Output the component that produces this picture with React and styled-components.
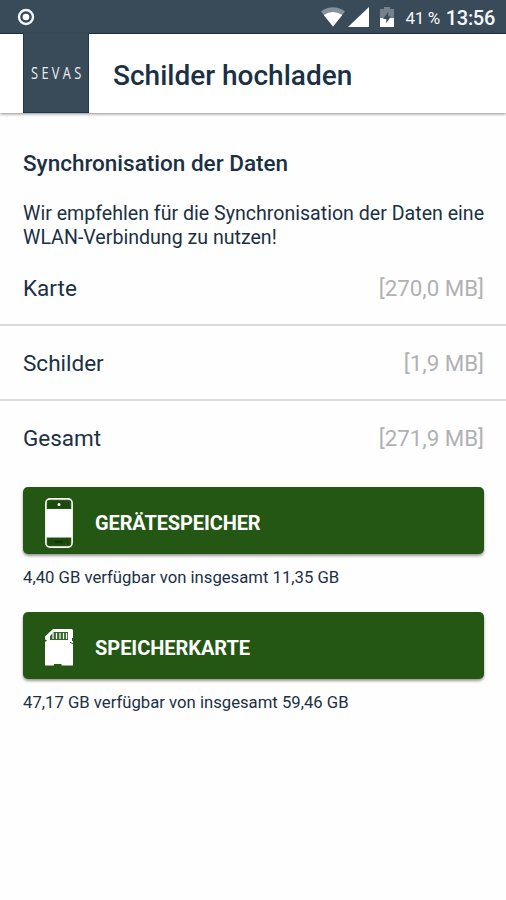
import styled, {createGlobalStyle} from "styled-components"

const sizes = [
    {label: "Karte", value: "[270,0 MB]"},
    {label: "Schilder", value: "[1,9 MB]"},
    {label: "Gesamt", value: "[271,9 MB]"},
]

const App = () => {

return (
    <Screen>
        <GlobalStyle/>
        <StatusBar>
            <RecordIcon/>
            <StatusIcons>
                <WifiIcon/>
                <SignalIcon/>
                <BatteryIcon/>
                <Percent>41 %</Percent>
                <Clock>13:56</Clock>
            </StatusIcons>
        </StatusBar>
        <Header>
            <Logo><LogoText>SEVAS</LogoText></Logo>
            <Title>Schilder hochladen</Title>
        </Header>
        <Intro>
            <Subtitle>Synchronisation der Daten</Subtitle>
            <Text>Wir empfehlen für die Synchronisation der Daten eine<br/>WLAN-Verbindung zu nutzen!</Text>
        </Intro>
        <List>
            {sizes.map(({label, value}) => (
                <Row key={label}>
                    <span>{label}</span>
                    <Value>{value}</Value>
                </Row>
            ))}
        </List>
        <Actions>
            <Button $spacing="-0.12px"><PhoneIcon/>GERÄTESPEICHER</Button>
            <Caption>4,40 GB verfügbar von insgesamt 11,35 GB</Caption>
            <Button $spacing="-0.04px"><CardIcon/>SPEICHERKARTE</Button>
            <Caption>47,17 GB verfügbar von insgesamt 59,46 GB</Caption>
        </Actions>
    </Screen>
)

}

const RecordIcon = () => (
    <svg width="18" height="18" viewBox="0 0 18 18">
        <circle cx="9" cy="9" r="7" fill="none" stroke="#f3f6f8" strokeWidth="2.4"/>
        <circle cx="9" cy="9" r="3.3" fill="#fff"/>
    </svg>
)

const WifiIcon = () => (
    <svg width="24" height="20" viewBox="0 0 24 20">
        <path d="M0 4.4Q12 -3.8 24 4.4L12 19.5Z" fill="#84919b"/>
        <path d="M2.7 8Q12 2 21.3 8L12 19.5Z" fill="#fff"/>
    </svg>
)

const SignalIcon = () => (
    <svg width="21" height="20" viewBox="0 0 21 20">
        <path d="M21 0V20H0Z" fill="#fff"/>
    </svg>
)

const BatteryIcon = () => (
    <svg width="14" height="20" viewBox="0 0 14 20">
        <path d="M4 0H10V2H14V11H0V2H4Z" fill="#74828d"/>
        <path d="M0 11H14V20H0Z" fill="#fff"/>
        <path d="M8.2 5L3 12H6.3V16L11 9.6H8.2Z" fill="#394b59"/>
    </svg>
)

const PhoneIcon = () => (
    <svg width="28" height="50" viewBox="0 0 28 50">
        <rect x="0.9" y="0.9" width="26.2" height="48.2" rx="4" fill="#255714" stroke="#fff" strokeWidth="1.6"/>
        <path d="M1 11H27V39.5H1Z" fill="#fff"/>
        <path d="M3 3.5H25V10H3ZM3 40.5H25V46.5H3Z" fill="#1a4b0d"/>
        <circle cx="14" cy="6.4" r="1.5" fill="#fff"/>
        <path d="M10 43.8H18" stroke="#0d3508" strokeWidth="1.8"/>
    </svg>
)

const CardIcon = () => (
    <svg width="28" height="37" viewBox="0 0 28 37">
        <path d="M8 0H26.5Q28 0 28 1.5V9H27V12H28V36.5H16.5V35H9V36.5H0V13L2 11.5L0 10.5V7.5Z" fill="#fff"/>
        <path d="M5 11V7L9 3H23V11Z" fill="#34662a"/>
        <path d="M8 4V10M11.5 4V10M15 4V10M18.5 4V10M21.5 4V10" stroke="#fff" strokeWidth="1.2"/>
        <path d="M25 13.5L28 14.5" stroke="#255714" strokeWidth="1"/>
    </svg>
)

const GlobalStyle = createGlobalStyle`
    body {
        margin: 0;
        background: #fefefe;
    }
    * {
        box-sizing: border-box;
    }
`

const Screen = styled.main`
    width: 506px;
    height: 900px;
    overflow: hidden;
    background: #fefefe;
    color: #1b3045;
    font-family: Roboto, "Liberation Sans", sans-serif;
    white-space: nowrap;
`

const StatusBar = styled.div`
    height: 34px;
    padding: 1px 11px 0 17px;
    display: flex;
    align-items: center;
    justify-content: space-between;
    background: #394b59;
    border-bottom: 1px solid #18334b;
    color: #f5f7f8;
`

const StatusIcons = styled.div`
    display: flex;
    align-items: center;

    svg:nth-child(2) {
        margin-left: 3px;
    }
    svg:nth-child(3) {
        margin-left: 11px;
    }
`

const Percent = styled.span`
    margin: 1px 0 0 12px;
    font-size: 17px;
    letter-spacing: -0.4px;
`

const Clock = styled.span`
    margin: 1px 0 0 6px;
    font-size: 20px;
    font-weight: 500;
    letter-spacing: -0.3px;
`

const Header = styled.header`
    height: 79px;
    padding-left: 23px;
    display: flex;
    align-items: center;
    background: #fff;
    box-shadow: 0 1px 3px rgba(0, 0, 0, 0.45);
`

const Logo = styled.div`
    width: 66px;
    height: 80px;
    margin-top: -1px;
    padding-left: 7px;
    display: flex;
    align-items: center;
    background: #394b59;
    border: solid #1d374d;
    border-width: 0 1px 1px;
`

const LogoText = styled.span`
    color: #e9eef3;
    font-family: "Open Sans", sans-serif;
    font-size: 16px;
    letter-spacing: 4.2px;
    transform: scaleX(0.8);
    transform-origin: left;
`

const Title = styled.h1`
    margin: 4px 0 0 24px;
    font-size: 28px;
    font-weight: 500;
`

const Intro = styled.section`
    padding: 36px 23px 0;
`

const Subtitle = styled.h2`
    margin: 0;
    font-size: 22.5px;
    font-weight: 500;
    line-height: 28px;
`

const Text = styled.p`
    margin: 25px 0 0;
    font-size: 19.6px;
    line-height: 24px;
`

const List = styled.div`
    margin-top: 1px;
`

const Row = styled.div`
    height: 75px;
    padding: 0 22px 0 23px;
    display: flex;
    align-items: center;
    justify-content: space-between;
    font-size: 22.5px;

    &:first-child {
        height: 73px;
    }
    & + & {
        border-top: 2px solid #d9d9d9;
    }
`

const Value = styled.span`
    color: #b0b1b3;
    font-size: 22.3px;
`

const Actions = styled.section`
    padding: 13px 22px 0 23px;
`

const Button = styled.button`
    width: 100%;
    height: 67px;
    padding: 5px 0 0 22px;
    display: flex;
    align-items: center;
    gap: 22px;
    border: none;
    border-radius: 5px;
    background: #255714;
    box-shadow: 0 2px 3px rgba(0, 0, 0, 0.4);
    color: #fff;
    font-family: inherit;
    font-size: 20px;
    font-weight: 700;
    letter-spacing: ${({$spacing}) => $spacing};

    svg {
        margin-top: -1px;
    }
`

const Caption = styled.p`
    height: 57.5px;
    margin: 0;
    padding-top: 12px;
    font-size: 16.7px;
    line-height: 24px;
`

export default App
